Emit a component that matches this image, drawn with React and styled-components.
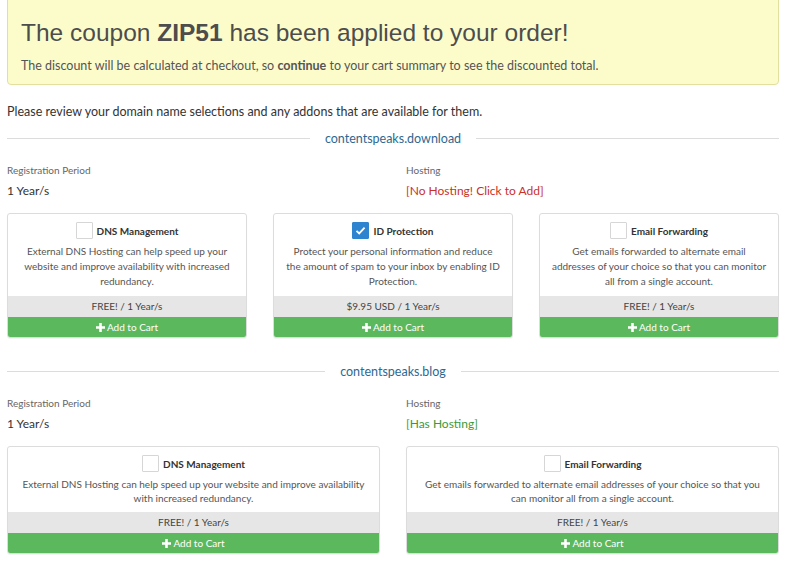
import React from 'react';
import styled, { createGlobalStyle } from 'styled-components';

const GlobalStyle = createGlobalStyle`
  body {
    margin: 0;
    background: #fff;
    font-family: Lato, "Open Sans", sans-serif;
    color: #333;
  }
`;

const Page = styled.div`
  padding: 0 21px 20px 7px;
`;

const Alert = styled.div`
  margin-top: -6px;
  background: #fcfccb;
  border: 1px solid #e2df9f;
  border-radius: 4px;
  padding: 23px 13px 10px;

  h1 {
    margin: 0 0 11px;
    font-family: "Liberation Sans", Arial, sans-serif;
    font-weight: normal;
    font-size: 24.5px;
    line-height: 29px;
    color: #4d4d4d;
  }

  p {
    margin: 0;
    font-size: 12.5px;
    line-height: 16px;
    color: #555;
  }
`;

const Intro = styled.p`
  margin: 19px 0 0;
  font-size: 12.5px;
  line-height: 16px;
  color: #333;
`;

const Divider = styled.div`
  display: flex;
  align-items: center;
  gap: 15px;
  margin-top: ${(p) => p.top}px;
  height: 18px;
  font-size: 12.5px;
  color: #2f6791;

  &::before,
  &::after {
    content: '';
    flex: 1;
    height: 1px;
    background: #dcdcdc;
  }
`;

const InfoRow = styled.div`
  display: grid;
  grid-template-columns: 1fr 1fr;
  column-gap: 26px;
  margin-top: 16px;
`;

const Label = styled.div`
  font-size: 10px;
  line-height: 14px;
  color: #666;
`;

const Value = styled.div`
  margin-top: 6px;
  font-size: 12px;
  line-height: 16px;
  color: ${(p) => p.color || '#333'};
`;

const CardGrid = styled.div`
  display: grid;
  grid-template-columns: repeat(${(p) => p.cols}, 1fr);
  gap: 26px;
  margin-top: 14px;
`;

const Card = styled.div`
  border: 1px solid #dcdcdc;
  border-radius: 3px;
  display: flex;
  flex-direction: column;
  overflow: hidden;
  box-shadow: 0 1px 1px rgba(0, 0, 0, 0.05);
`;

const CardBody = styled.div`
  flex: 1;
  padding: 8px 11.5px 7px;
  text-align: center;
`;

const TitleRow = styled.div`
  display: flex;
  align-items: center;
  justify-content: center;
  gap: 4px;
`;

const Box = styled.span`
  width: 17px;
  height: 17px;
  box-sizing: border-box;
  border: 1px solid ${(p) => (p.checked ? '#2f84cf' : '#d6d6d6')};
  background: ${(p) => (p.checked ? '#2f84cf' : '#fff')};
  border-radius: 1px;
  display: flex;
  align-items: center;
  justify-content: center;
`;

const Title = styled.span`
  font-size: 10px;
  font-weight: bold;
  color: #333;
`;

const Desc = styled.p`
  margin: 5px 0 0;
  font-size: 10px;
  line-height: ${(p) => (p.tight ? 14 : 15)}px;
  color: #555;
`;

const Price = styled.div`
  background: #e6e6e6;
  height: 21px;
  line-height: 21px;
  text-align: center;
  font-size: 10px;
  color: #444;
`;

const AddButton = styled.button`
  border: 0;
  margin: 0;
  height: 20px;
  background: #5cb85c;
  color: #fff;
  font-family: inherit;
  font-size: 10px;
  display: flex;
  align-items: center;
  justify-content: center;
  gap: 2px;
  cursor: pointer;
`;

const Plus = () => (
  <svg width="9" height="9" viewBox="0 0 9 9">
    <path d="M3.2 0h2.6v3.2H9v2.6H5.8V9H3.2V5.8H0V3.2h3.2z" fill="#fff" />
  </svg>
);

const Check = () => (
  <svg width="11" height="11" viewBox="0 0 11 11">
    <path d="M1.5 5.8l2.7 2.6L9.6 2.6" fill="none" stroke="#fff" strokeWidth="1.8" />
  </svg>
);

const Addon = ({ title, desc, price, checked, tight }) => (
  <Card>
    <CardBody>
      <TitleRow>
        <Box checked={checked}>{checked && <Check />}</Box>
        <Title>{title}</Title>
      </TitleRow>
      <Desc tight={tight}>{desc}</Desc>
    </CardBody>
    <Price>{price}</Price>
    <AddButton>
      <Plus /> Add to Cart
    </AddButton>
  </Card>
);

const dns = {
  title: 'DNS Management',
  desc: 'External DNS Hosting can help speed up your website and improve availability with increased redundancy.',
  price: 'FREE! / 1 Year/s',
};
const idp = {
  title: 'ID Protection',
  desc: 'Protect your personal information and reduce the amount of spam to your inbox by enabling ID Protection.',
  price: '$9.95 USD / 1 Year/s',
  checked: true,
};
const email = {
  title: 'Email Forwarding',
  desc: 'Get emails forwarded to alternate email addresses of your choice so that you can monitor all from a single account.',
  price: 'FREE! / 1 Year/s',
};

const App = () => {
  return (
    <Page>
      <GlobalStyle />
      <Alert>
        <h1>
          The coupon <b>ZIP51</b> has been applied to your order!
        </h1>
        <p>
          The discount will be calculated at checkout, so <b>continue</b> to your cart summary to see the
          discounted total.
        </p>
      </Alert>
      <Intro>Please review your domain name selections and any addons that are available for them.</Intro>

      <Divider top={9}>contentspeaks.download</Divider>
      <InfoRow>
        <div>
          <Label>Registration Period</Label>
          <Value>1 Year/s</Value>
        </div>
        <div>
          <Label>Hosting</Label>
          <Value color="#c9302c">[No Hosting! Click to Add]</Value>
        </div>
      </InfoRow>
      <CardGrid cols={3}>
        <Addon {...dns} />
        <Addon {...idp} />
        <Addon {...email} />
      </CardGrid>

      <Divider top={24}>contentspeaks.blog</Divider>
      <InfoRow>
        <div>
          <Label>Registration Period</Label>
          <Value>1 Year/s</Value>
        </div>
        <div>
          <Label>Hosting</Label>
          <Value color="#3a9a3a">[Has Hosting]</Value>
        </div>
      </InfoRow>
      <CardGrid cols={2}>
        <Addon {...dns} tight />
        <Addon {...email} tight />
      </CardGrid>
    </Page>
  );
};

export default App;
